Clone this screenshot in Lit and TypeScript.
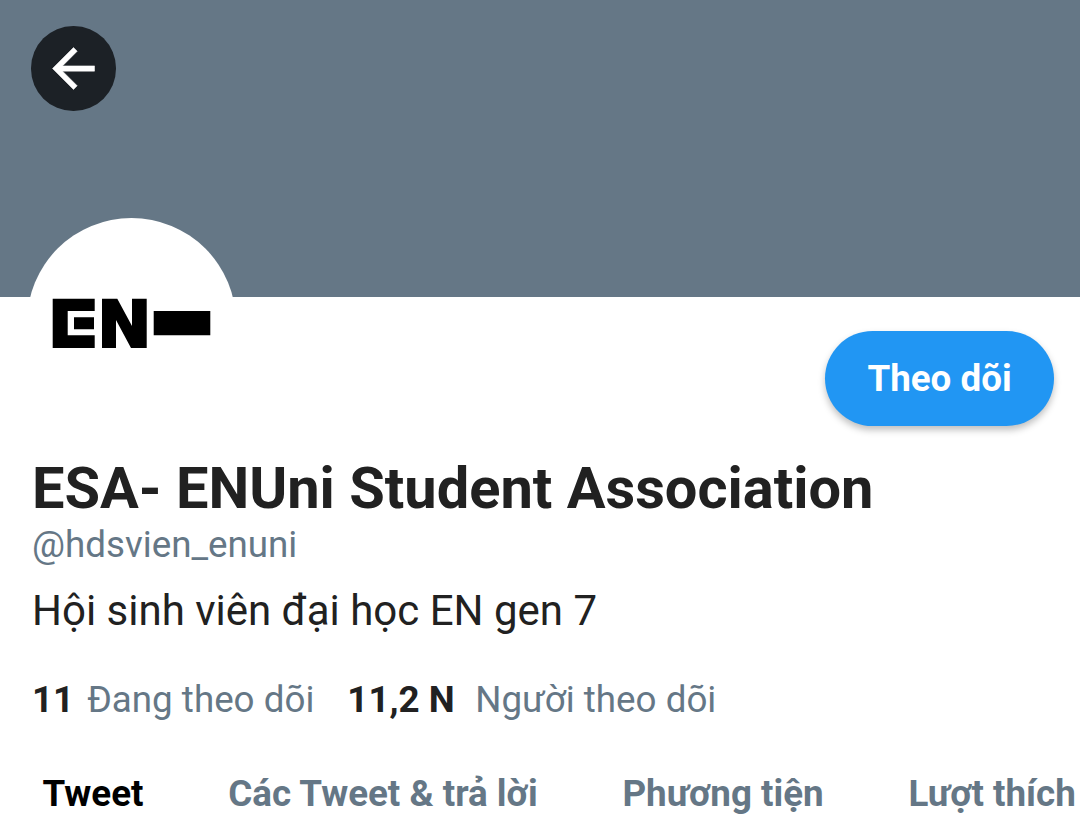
import { html, css, LitElement } from 'lit';
import { customElement } from 'lit/decorators.js';

@customElement('app-root')
class AppRoot extends LitElement {
  static styles = css`
    :host {
      display: block;
      height: 838px;
      overflow: hidden;
      background: #ffffff;
      color: #212121;
      font-family: Roboto, sans-serif;
      white-space: nowrap;
    }

    * {
      box-sizing: border-box;
    }

    p, h1 {
      margin: 0;
    }

    .banner {
      height: 297px;
      padding: 26px 31px;
      background: #657786;
    }

    .back {
      display: flex;
      align-items: center;
      justify-content: center;
      width: 84.5px;
      height: 84.5px;
      padding: 0;
      border: 0;
      border-radius: 50%;
      background: #1c2126;
    }

    .avatar svg {
      display: block;
    }

    .profile {
      position: relative;
      padding: 34px 26px 0 32px;
    }

    .avatar {
      position: absolute;
      left: 27px;
      top: -79px;
      width: 209px;
      height: 209px;
      border-radius: 50%;
      background: #ffffff;
    }

    .actions {
      display: flex;
      justify-content: flex-end;
    }

    .follow {
      width: 229px;
      height: 95px;
      padding: 0;
      border: 0;
      border-radius: 48px;
      background: #2196f3;
      box-shadow: 0 4px 7px #00000040;
      color: #ffffff;
      font: bold 36.75px Roboto, sans-serif;
    }

    .name {
      margin-top: 27px;
      font-size: 57.75px;
      line-height: 70px;
      font-weight: bold;
    }

    .handle {
      font-size: 36.75px;
      line-height: 44px;
      color: #657786;
    }

    .bio {
      margin-top: 19px;
      font-size: 42px;
      line-height: 50px;
    }

    .stats {
      display: flex;
      gap: 33px;
      margin-top: 42px;
      font-size: 36.75px;
      line-height: 44px;
      color: #657786;
    }

    .stat {
      display: flex;
      gap: 13px;
    }

    .followers {
      gap: 20.5px;
    }

    .stats b {
      color: #212121;
    }

    .tabs {
      display: flex;
      gap: 84.75px;
      margin-top: 50px;
      padding-left: 42.5px;
      font-size: 36.75px;
      line-height: 44px;
      font-weight: bold;
      color: #657786;
    }

    .active {
      color: #000000;
    }
  `;

  render() {
    return html`
      <div class="banner">
        <button class="back" aria-label="Back">
          <svg width="63" height="63" viewBox="0 0 24 24" fill="#fff" stroke="#fff" stroke-width="0.2">
            <path d="M20 11H7.83l5.590-5.590L12 4l-8 8 8 8 1.410-1.410L7.830 13H20v-2z"/>
          </svg>
        </button>
      </div>
      <div class="profile">
        <div class="avatar">
          <svg width="209" height="209" viewBox="-1 0 209 209">
            <path d="M24.700 80.700H66.700V93H39.700V117.300H66.700V130H24.700ZM46 99.300H66V111.300H46Z"/>
            <path d="M74 80.700H89.300L104 108V80.700H118.700V130H103L88 102V130H74Z"/>
            <path d="M125.700 93H182.300V117.300H125.700Z"/>
          </svg>
        </div>
        <div class="actions"><button class="follow">Theo dõi</button></div>
        <h1 class="name">ESA- ENUni Student Association</h1>
        <p class="handle">@hdsvien_enuni</p>
        <p class="bio">Hội sinh viên đại học EN gen 7</p>
        <div class="stats">
          <div class="stat"><b>11</b><span>Đang theo dõi</span></div>
          <div class="stat followers"><b>11,2 N</b><span>Người theo dõi</span></div>
        </div>
      </div>
      <div class="tabs">
        <span class="active">Tweet</span>
        <span>Các Tweet &amp; trả lời</span>
        <span>Phương tiện</span>
        <span>Lượt thích</span>
      </div>
    `;
  }
}
